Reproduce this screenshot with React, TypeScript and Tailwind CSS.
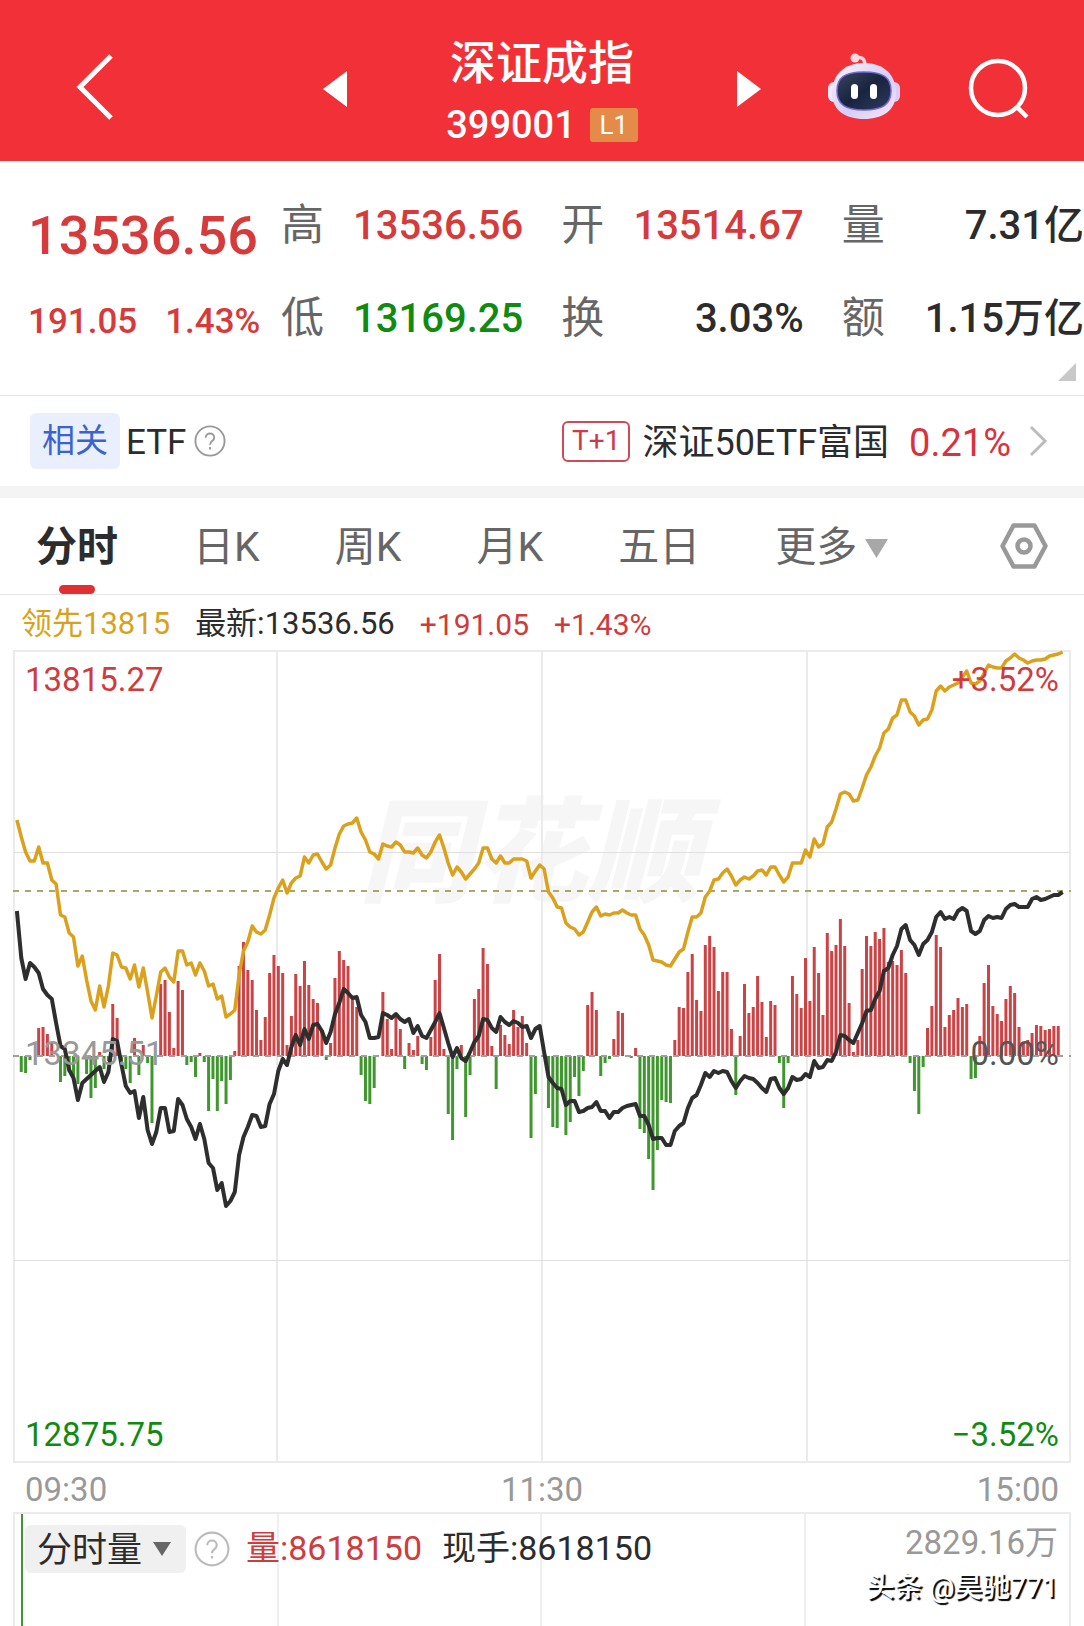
import React from "react";

const FIRST_X = 16.9;
const STEP = 4.357;
const ZERO_Y = 1056;

const lead = [
  820, 837, 852, 861, 861, 847, 863, 863, 880, 884, 915, 917, 933, 937, 966, 956, 980, 1001, 1010, 986,
  1007, 986, 953, 955, 967, 968, 979, 965, 987, 968, 992, 1018, 996, 972, 968, 977, 982, 951, 951, 965,
  963, 975, 963, 971, 986, 984, 999, 996, 1017, 1014, 1010, 975, 951, 942, 926, 932, 934, 930, 915, 898,
  888, 880, 893, 883, 878, 876, 857, 863, 855, 854, 862, 869, 865, 848, 834, 826, 824, 823, 818, 832,
  840, 852, 854, 859, 844, 846, 847, 842, 845, 852, 852, 853, 848, 855, 858, 852, 842, 835, 848, 863,
  875, 867, 872, 879, 874, 869, 863, 848, 848, 859, 863, 856, 863, 863, 859, 859, 859, 861, 878, 871,
  865, 869, 892, 898, 907, 908, 923, 927, 929, 935, 932, 922, 912, 907, 916, 914, 915, 913, 913, 910,
  913, 915, 915, 929, 935, 945, 960, 961, 962, 965, 966, 959, 952, 949, 932, 917, 917, 913, 897, 891,
  880, 879, 873, 869, 876, 885, 880, 877, 879, 876, 871, 870, 875, 867, 867, 875, 882, 877, 863, 863,
  863, 850, 857, 839, 847, 844, 827, 822, 809, 794, 792, 794, 801, 800, 788, 775, 767, 756, 748, 733,
  729, 718, 715, 700, 700, 712, 716, 725, 720, 719, 710, 691, 686, 691, 687, 685, 683, 677, 671, 683,
  684, 681, 673, 665, 667, 668, 668, 661, 658, 654, 658, 660, 663, 661, 660, 660, 659, 656, 655, 654, 652,
];

const price = [
  911, 958, 979, 963, 967, 973, 989, 995, 999, 1023, 1046, 1049, 1070, 1078, 1100, 1083, 1079, 1075, 1071, 1067,
  1082, 1072, 1039, 1041, 1065, 1086, 1093, 1091, 1118, 1097, 1130, 1144, 1132, 1108, 1108, 1132, 1131, 1099, 1105, 1119,
  1127, 1139, 1124, 1139, 1163, 1168, 1190, 1183, 1206, 1201, 1192, 1155, 1137, 1127, 1115, 1116, 1127, 1126, 1104, 1094,
  1071, 1059, 1065, 1047, 1035, 1045, 1029, 1039, 1025, 1024, 1031, 1043, 1032, 1014, 1003, 989, 993, 998, 997, 1015,
  1022, 1038, 1038, 1037, 1013, 1015, 1018, 1014, 1019, 1022, 1019, 1033, 1026, 1036, 1038, 1030, 1022, 1013, 1028, 1043,
  1057, 1048, 1058, 1061, 1052, 1042, 1036, 1019, 1020, 1028, 1032, 1017, 1022, 1025, 1021, 1023, 1027, 1026, 1038, 1029,
  1026, 1052, 1077, 1083, 1088, 1089, 1105, 1101, 1101, 1112, 1111, 1108, 1107, 1102, 1111, 1111, 1118, 1112, 1112, 1108,
  1106, 1105, 1104, 1116, 1116, 1125, 1139, 1138, 1138, 1145, 1145, 1131, 1126, 1123, 1108, 1098, 1095, 1085, 1073, 1077,
  1071, 1073, 1071, 1072, 1081, 1088, 1081, 1076, 1078, 1079, 1083, 1088, 1092, 1079, 1078, 1088, 1094, 1088, 1077, 1080,
  1079, 1074, 1077, 1061, 1068, 1067, 1060, 1061, 1052, 1035, 1036, 1040, 1043, 1033, 1023, 1011, 1010, 999, 991, 971,
  968, 955, 946, 929, 925, 940, 945, 955, 944, 940, 932, 917, 912, 919, 917, 919, 911, 908, 911, 931,
  934, 931, 920, 916, 918, 917, 918, 909, 905, 904, 907, 907, 907, 899, 897, 900, 899, 897, 895, 895, 892,
];

const momentum = [
  0, -16, -17, -4, 0, 28, 29, 22, 13, 0, -26, -20, -16, -20, -28, 0, -18, -42, -32, 4,
  -13, -5, 52, 38, -7, -13, -27, 18, -19, 11, -7, -67, 0, 72, 76, 44, 8, 75, 66, -9,
  -6, -21, 3, -6, -55, -23, -55, -25, -48, -24, 5, 90, 114, 86, 76, 46, 16, 39, 83, 101,
  90, 83, 11, 40, 82, 70, 95, 71, 57, 53, 26, -4, 13, 78, 105, 96, 90, 59, 49, -19,
  -45, -48, -32, 0, 64, 37, 7, 42, 27, -13, 13, 6, 20, -8, -14, 19, 76, 102, 7, -58,
  -84, -13, 11, -61, -19, 57, 67, 108, 92, 10, -33, 31, 21, 12, 46, 29, 40, 13, -82, -38,
  0, 0, -52, -71, -72, -35, -79, -66, -21, -40, -15, 51, 64, 46, -20, -7, -3, 17, 45, 43,
  1, -2, 8, -73, -77, -103, -134, -94, -44, -46, -47, 16, 49, 48, 84, 102, 56, 45, 111, 120,
  109, 65, 84, 84, 27, -39, 20, 72, 43, 49, 80, 54, 19, 55, 51, -7, -52, -7, 80, 62,
  48, 98, 55, 109, 83, 41, 123, 105, 111, 137, 110, 53, 4, 16, 87, 120, 110, 124, 117, 128,
  94, 95, 91, 106, 83, -7, -35, -58, -11, 28, 50, 121, 109, 29, 41, 46, 58, 49, 52, -23,
  -22, 20, 73, 91, 50, 42, 35, 57, 70, 63, 29, 14, 16, 23, 31, 30, 26, 27, 30, 30, 0,
];

const toPoints = (ys: number[]) => ys.map((y, i) => `${(FIRST_X + i * STEP).toFixed(1)},${y}`).join(" ");

function Triangle({ className, points }: { className: string; points: string }) {
  return (
    <svg viewBox="0 0 24 36" preserveAspectRatio="none" className={className} aria-hidden="true">
      <polygon points={points} fill="currentColor" />
    </svg>
  );
}

function HelpIcon({ className }: { className: string }) {
  return (
    <svg viewBox="0 0 34 34" className={className} fill="none" stroke="currentColor" strokeWidth="2" aria-hidden="true">
      <circle cx="17" cy="17" r="15.5" />
      <path d="M12.5 13.5c0-6 9-6 9 0 0 3.6-4.5 3.6-4.5 7.5M17 23.5v2.5" />
    </svg>
  );
}

function RobotIcon() {
  return (
    <svg viewBox="0 0 72 68" className="h-[68px] w-[72px]" aria-hidden="true">
      <defs>
        <linearGradient id="shell" x1="0" y1="0" x2="1" y2="1">
          <stop offset="0" stopColor="#fff3f6" />
          <stop offset="0.55" stopColor="#d3cffa" />
          <stop offset="1" stopColor="#fbe4f6" />
        </linearGradient>
        <linearGradient id="visor" x1="0" y1="0" x2="1" y2="1">
          <stop offset="0" stopColor="#39455f" />
          <stop offset="0.5" stopColor="#18243f" />
          <stop offset="1" stopColor="#2e3a5c" />
        </linearGradient>
      </defs>
      <path d="M28 5c6-2 9 1 9 8" fill="none" stroke="#ffd5dc" strokeWidth="3.5" />
      <circle cx="27" cy="5" r="4.5" fill="#ffd9df" />
      <rect x="0" y="29" width="14" height="20" rx="6" fill="#f5e6fb" />
      <rect x="58" y="29" width="14" height="20" rx="6" fill="#d9cdf8" />
      <path d="M36 10c20 0 32 12 32 30 0 17-13 26-32 26S4 57 4 40c0-18 12-30 32-30z" fill="url(#shell)" />
      <path d="M36 19c20 0 27 6 27 19s-8 19-27 19-27-6-27-19 7-19 27-19z" fill="url(#visor)" stroke="#7467cf" strokeWidth="1.5" />
      <rect x="23" y="31" width="7" height="15" rx="3.5" fill="#fff" />
      <rect x="42" y="31" width="7" height="15" rx="3.5" fill="#fff" />
    </svg>
  );
}

function Header() {
  return (
    <header className="flex h-[161px] items-center bg-[#f23038] px-[54px] text-white">
      <div className="flex flex-1 justify-start pt-3">
        <button aria-label="返回" className="pl-5">
          <svg viewBox="0 0 40 66" className="h-[66px] w-10" fill="none" stroke="currentColor" strokeWidth="5" aria-hidden="true">
            <path d="M37 2 6 33l31 31" />
          </svg>
        </button>
      </div>
      <div className="flex w-[438px] items-center justify-between">
        <button aria-label="上一个" className="pt-4">
          <Triangle className="h-9 w-6" points="24,0 24,36 0,18" />
        </button>
        <div className="flex flex-col items-center pt-[26px]">
          <h1 className="text-[46px] leading-[62px] font-medium">深证成指</h1>
          <p className="flex items-center gap-[14px] text-[38px] leading-[62px] font-medium">
            <span>399001</span>
            <span className="flex h-[34px] w-12 items-center justify-center rounded-[3px] bg-[#e58b49] text-[26px] font-normal">L1</span>
          </p>
        </div>
        <button aria-label="下一个" className="pt-4">
          <Triangle className="h-9 w-6" points="0,0 24,18 0,36" />
        </button>
      </div>
      <div className="flex flex-1 items-center justify-end gap-[68px] pt-3">
        <button aria-label="智能助手">
          <RobotIcon />
        </button>
        <button aria-label="搜索" className="pt-1">
          <svg viewBox="0 0 62 62" className="size-[62px]" fill="none" stroke="currentColor" strokeWidth="4.5" aria-hidden="true">
            <circle cx="30" cy="30" r="27" />
            <path d="m48 48 11 11" />
          </svg>
        </button>
      </div>
    </header>
  );
}

const stats = [
  { label: "高", value: "13536.56", tone: "text-[#d63a3b]" },
  { label: "开", value: "13514.67", tone: "text-[#d63a3b]" },
  { label: "量", value: "7.31亿", tone: "text-[#2c2c2c]" },
  { label: "低", value: "13169.25", tone: "text-[#118a11]" },
  { label: "换", value: "3.03%", tone: "text-[#2c2c2c]" },
  { label: "额", value: "1.15万亿", tone: "text-[#2c2c2c]" },
];

function Quote() {
  return (
    <section className="flex border-b border-[#e6e6e6] pt-[18px]">
      <div className="flex w-[281px] flex-col pl-7 font-medium text-[#d63a3b]">
        <p className="pt-[10px] text-[54px] leading-[93px]">13536.56</p>
        <p className="flex gap-7 text-[35px] leading-[80px]">
          <span>191.05</span>
          <span>1.43%</span>
        </p>
      </div>
      <div className="flex-1">
        <dl className="grid grid-cols-3 gap-x-[38px]">
          {stats.map((s) => (
            <div key={s.label} className="flex items-center justify-between text-[40px] leading-[93px] whitespace-nowrap">
              <dt className="text-[43px] text-[#666]">{s.label}</dt>
              <dd className={`font-medium ${s.tone}`}>{s.value}</dd>
            </div>
          ))}
        </dl>
        <div className="flex h-[30px] justify-end pr-2 text-[#c8c8c8]">
          <Triangle className="-mt-5 h-[36px] w-[18px] pt-[18px]" points="24,0 24,36 0,36" />
        </div>
      </div>
    </section>
  );
}

function Related() {
  return (
    <section className="flex h-[102px] items-center border-b-12 border-[#f4f4f4] pr-9 pl-[30px] text-[35px] text-[#2c2c2c]">
      <span className="flex h-14 items-center rounded-md bg-[#e9effc] px-3 text-[33px] text-[#3a63cf]">相关</span>
      <span className="pt-1 pl-1.5">ETF</span>
      <button aria-label="说明" className="pl-2 text-[#999]">
        <HelpIcon className="size-8" />
      </button>
      <a href="#etf" className="ml-auto flex items-center">
        <span className="flex h-[41px] items-center rounded-md border-2 border-[#cf4a57] px-2 text-[28px] text-[#d03a48]">T+1</span>
        <span className="pt-1 pl-3 text-[36px]">深证50ETF富国</span>
        <span className="pt-1 pl-5 text-[38px] text-[#d8323f]">0.21%</span>
        <svg viewBox="0 0 20 34" className="ml-[18px] h-8 w-[19px]" fill="none" stroke="#bbb" strokeWidth="3" aria-hidden="true">
          <path d="m2 2 15 15L2 32" />
        </svg>
      </a>
    </section>
  );
}

function Tabs() {
  return (
    <nav className="flex h-[97px] items-stretch gap-[75px] border-b border-[#e6e6e6] pr-9 pl-9 text-[41px] text-[#666] whitespace-nowrap">
      <button className="relative pt-1 font-bold text-[#2c2c2c]">
        分时
        <span className="absolute bottom-0 left-1/2 h-[9px] w-9 -translate-x-1/2 rounded-full bg-[#e03033]" />
      </button>
      <button className="pt-1">日K</button>
      <button className="pt-1">周K</button>
      <button className="pt-1">月K</button>
      <button className="pt-1">五日</button>
      <button className="flex items-center gap-2 pt-1">
        更多
        <Triangle className="h-[19px] w-[23px] text-[#a8a8a8]" points="0,0 24,0 12,36" />
      </button>
      <button aria-label="设置" className="ml-auto text-[#999]">
        <svg viewBox="0 0 48 48" className="size-12" fill="none" stroke="currentColor" strokeWidth="4.5" aria-hidden="true">
          <path d="M13.5 3.5h21L45.5 24l-11 20.500h-21L2.500 24z" strokeLinejoin="round" />
          <circle cx="24" cy="24" r="6.500" />
        </svg>
      </button>
    </nav>
  );
}

function Chart() {
  return (
    <section className="px-[13px] text-[33px]">
      <p className="flex h-[55px] items-center gap-[25px] pt-1 pl-2 text-[31px] whitespace-nowrap text-[#d03a3c]">
        <span className="text-[#d9a21c]">领先13815</span>
        <span className="text-[#2c2c2c]">最新:13536.56</span>
        <span className="text-[30px]">+191.05</span>
        <span className="text-[30px]">+1.43%</span>
      </p>
      <div className="relative">
        <svg viewBox="13 650 1058 813" className="block h-auto w-full" role="img" aria-label="分时走势">
          <text x="530" y="893" textAnchor="middle" fontSize="114" fontWeight="900" fontStyle="italic" fill="#f6f6f6">
            同花顺
          </text>
          <g stroke="#ebebeb" strokeWidth="2" fill="none">
            <rect x="14" y="651" width="1056" height="811" />
            <path d="M277 651V1462M542 651V1462M807 651V1462" />
            <path d="M14 852.500H1070M14 1260.500H1070" stroke="#e0e0e0" strokeWidth="1" />
          </g>
          {momentum.map((h, i) =>
            h === 0 ? null : (
              <rect
                key={i}
                x={FIRST_X + i * STEP - 1.5}
                y={h > 0 ? ZERO_Y - h : ZERO_Y}
                width="3"
                height={Math.abs(h)}
                fill={h > 0 ? "#cb4345" : "#40962f"}
              />
            ),
          )}
          <path d={`M13 ${ZERO_Y}H1071`} stroke="#a0a0a0" strokeWidth="2" strokeDasharray="6 6" />
          <path d="M13 891H1071" stroke="#aaa862" strokeWidth="2" strokeDasharray="6 6" />
          <polyline points={toPoints(lead)} fill="none" stroke="#dba11d" strokeWidth="3.5" strokeLinejoin="round" />
          <polyline points={toPoints(price)} fill="none" stroke="#2e2e2e" strokeWidth="4" strokeLinejoin="round" />
        </svg>
        <div className="absolute inset-0 flex flex-col justify-between px-3 pt-1 pb-0.5 leading-[52px]">
          <p className="flex justify-between text-[#cf3c3e]">
            <span>13815.27</span>
            <span>+3.52%</span>
          </p>
          <p className="flex justify-between pb-2 text-[#999]">
            <span>13345.51</span>
            <span className="text-[#555]">0.00%</span>
          </p>
          <p className="flex justify-between text-[#118a11]">
            <span>12875.75</span>
            <span>−3.52%</span>
          </p>
        </div>
      </div>
      <p className="flex h-[49px] items-center justify-between px-3 pt-1 text-[#999]">
        <span>09:30</span>
        <span>11:30</span>
        <span>15:00</span>
      </p>
    </section>
  );
}

function Volume() {
  return (
    <section className="relative mx-[13px] h-[114px] border-x-2 border-t-2 border-[#ebebeb]">
      <div className="absolute inset-0 grid grid-cols-4 divide-x-2 divide-[#efefef]" aria-hidden="true">
        <span />
        <span />
        <span />
        <span />
      </div>
      <div className="absolute inset-y-0 left-[6px] w-[2px] bg-[#40962f]" />
      <div className="relative flex justify-between pr-[11px] pl-[10px] text-[34px] whitespace-nowrap text-[#2c2c2c]">
        <div className="flex h-[69px] items-center">
          <div className="relative flex items-center">
            <select aria-label="指标" className="h-12 w-[161px] appearance-none rounded-md bg-[#f0f0f0] pl-3 text-[35px]">
              <option>分时量</option>
            </select>
            <Triangle className="pointer-events-none absolute right-[15px] h-[14px] w-[18px] text-[#666]" points="0,0 24,0 12,36" />
          </div>
          <button aria-label="说明" className="pl-2 text-[#bbb]">
            <HelpIcon className="size-9" />
          </button>
          <span className="pl-4 text-[#cf3c3e]">量:8618150</span>
          <span className="pl-5">现手:8618150</span>
        </div>
        <div className="flex flex-col items-end">
          <span className="text-[33px] leading-[58px] text-[#999]">2829.16万</span>
          <span className="text-[28px] leading-8 font-medium text-white [text-shadow:2px_2px_1px_#000]">头条 @昊驰771</span>
        </div>
      </div>
    </section>
  );
}

export default function App() {
  return (
    <main className='overflow-hidden bg-white font-[Roboto,"Noto_Sans_CJK_SC",sans-serif]' lang="zh-CN">
      <Header />
      <Quote />
      <Related />
      <Tabs />
      <Chart />
      <Volume />
    </main>
  );
}
